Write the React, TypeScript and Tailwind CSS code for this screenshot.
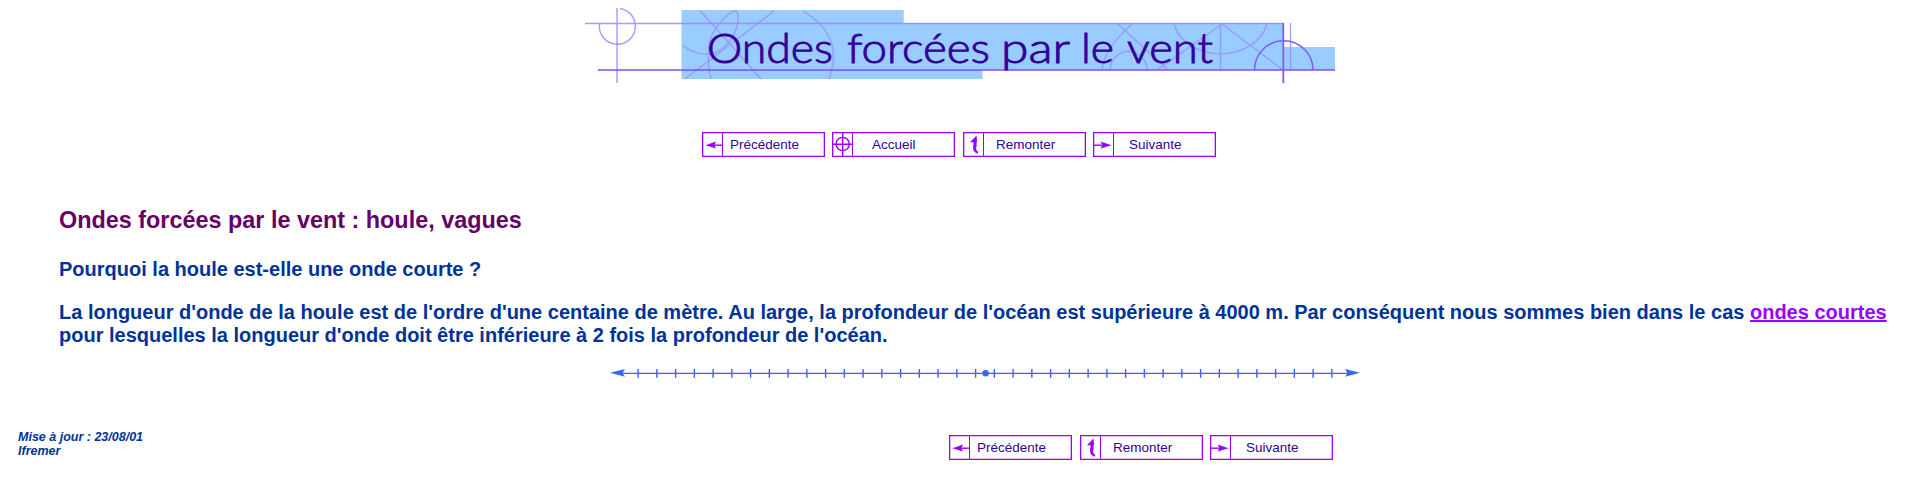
type IconName = "left" | "home" | "up" | "right";

function NavIcon({ name }: { name: IconName }) {
  return (
    <svg width="20" height="23" viewBox="0 0 20 23" fill="none" stroke="#9900ff" strokeWidth="1.4" className="block shrink-0">
      {name === "left" && (
        <>
          <path d="M7 12.2H20" />
          <path d="M2.5 12.2L13 8.6L11.3 12.2L13 15.4Z" fill="#9900ff" stroke="none" />
        </>
      )}
      {name === "right" && (
        <>
          <path d="M0 12.2H11" />
          <path d="M17.5 12.2L6.5 8.6L8.5 12.2L6.5 15.4Z" fill="#9900ff" stroke="none" />
        </>
      )}
      {name === "home" && (
        <>
          <circle cx="9.7" cy="11" r="6.6" />
          <path d="M0 11.2H20M9.7 0V23" />
        </>
      )}
      {name === "up" && (
        <>
          <path d="M12.6 2.6L6 9.2H13Z" fill="#9900ff" stroke="none" />
          <path d="M11 6V13.5" strokeWidth="3" />
          <path d="M9.4 12C8.4 17 10 19.8 14 20.6L14.2 18.8C12.4 17.5 11.6 16 12.5 12Z" fill="#9900ff" stroke="none" />
        </>
      )}
    </svg>
  );
}

function NavButton({ icon, label, pad }: { icon: IconName; label: string; pad: string }) {
  return (
    <a className="flex h-[25px] w-[122.6px] shrink-0 border border-[#9900ff] bg-white shadow-[inset_0_0_0_0.3px_#9900ff]">
      <span className="w-[20px] shrink-0 border-r border-[#9900ff]">
        <NavIcon name={icon} />
      </span>
      <span className={`${pad} text-[13.5px] leading-[23px] text-[#330099]`}>{label}</span>
    </a>
  );
}

function Banner() {
  return (
    <svg width="750" height="76" viewBox="585 8 750 76" fill="none" className="block shrink-0">
      <path d="M681.5 10H903.7V23H1283.5V47H1335V70H982.5V79H681.5Z" fill="#99ccff" />
      <g stroke="#9980ff" strokeOpacity="0.8" strokeWidth="1.4">
        <path d="M585 23.5H1283M617 8V83" />
        <path d="M599.5 24A18 18 0 1 0 620 8.5" />
        <g strokeOpacity="0.65">
          <path d="M700.5 11L761 79M774 11L685 79" />
          <path d="M682 45Q695 55 708 54C725 53 739 34 738 15Q737 8 729 14Q708 32 709 50Q707 65 711 79" />
          <path d="M803 11Q845 36 829 79" />
          <path d="M1118 24L1168 70M1132 24Q1103 50 1102 70M1110 70A18 18 0 0 1 1147 70M1157 70L1222 24L1283 70M1220.5 24V70M1174 24A47.5 37.5 0 0 0 1267 24" />
        </g>
        <path d="M1290.5 23V70" />
      </g>
      <path d="M598 70H1335" stroke="#7c4dff" strokeWidth="1.6" />
      <path d="M1283.3 23V83" stroke="#7c5cff" strokeWidth="1.8" />
      <path d="M1254.5 70A29 29 0 0 1 1313 70" stroke="#7c5cff" strokeWidth="1.5" />
      <g fill="#330099" fontFamily="Lato, 'Liberation Sans', sans-serif" fontSize="41" fontWeight="300" stroke="#330099" strokeWidth="0.9">
        <text x="707" y="63" textLength="126" lengthAdjust="spacingAndGlyphs">Ondes</text>
        <text x="847" y="63" textLength="143" lengthAdjust="spacingAndGlyphs">forcées</text>
        <text x="1001" y="63" textLength="69" lengthAdjust="spacingAndGlyphs">par</text>
        <text x="1081" y="63" textLength="33" lengthAdjust="spacingAndGlyphs">le</text>
        <text x="1127" y="63" textLength="86" lengthAdjust="spacingAndGlyphs">vent</text>
      </g>
    </svg>
  );
}

function Ruler() {
  return (
    <svg width="750" height="12" viewBox="0 0 750 12" className="block shrink-0">
      <path d="M10 6.4H740" stroke="#3366ff" strokeWidth="1.4" />
      {Array.from({ length: 38 }, (_, i) => (
        <path key={i} d={`M${28.1 + i * 18.75} 2V10.8`} stroke="#3366ff" strokeWidth="1.4" />
      ))}
      <circle cx="375.6" cy="6.3" r="3.2" fill="#3366ff" />
      <path d="M0 5.8L15 2L12.5 6.3L15 9.8Z M750 5.8L735 2L737.5 6.3L735 9.8Z" fill="#3366ff" />
    </svg>
  );
}

export default function App() {
  return (
    <div className="flex h-[488px] w-[1920px] flex-col overflow-hidden bg-white font-['Liberation_Sans',Arial,sans-serif] text-[#003399]">
      <header className="flex flex-col pt-2">
        <div className="pl-[585px]">
          <Banner />
        </div>
        <nav className="mt-12 flex pl-[702px]">
          <NavButton icon="left" label="Précédente" pad="pl-[7px]" />
          <div className="w-[7.4px]" />
          <NavButton icon="home" label="Accueil" pad="pl-[19px]" />
          <div className="w-[8.4px]" />
          <NavButton icon="up" label="Remonter" pad="pl-[12px]" />
          <div className="w-[7.4px]" />
          <NavButton icon="right" label="Suivante" pad="pl-[15px]" />
        </nav>
      </header>
      <main className="pt-[49px] pl-[59px] font-bold">
        <h1 className="text-[23.4px] leading-[28px] text-[#660066]">Ondes forcées par le vent : houle, vagues</h1>
        <h2 className="mt-[24px] text-[20px] leading-[23px]">Pourquoi la houle est-elle une onde courte ?</h2>
        <p className="mt-[20px] text-[20px] leading-[23px] whitespace-nowrap">
          La longueur d'onde de la houle est de l'ordre d'une centaine de mètre. Au large, la profondeur de l'océan est supérieure à 4000 m. Par conséquent nous sommes bien dans le cas{" "}
          <a className="text-[#9900ff] underline">ondes courtes</a>
          <br />
          pour lesquelles la longueur d'onde doit être inférieure à 2 fois la profondeur de l'océan.
        </p>
      </main>
      <div className="mt-[20px] pl-[610px]">
        <Ruler />
      </div>
      <footer className="mt-[50px] flex">
        <p className="w-[949px] pt-px pl-[18px] text-[12.5px] leading-[14px] font-bold italic">
          Mise à jour : 23/08/01
          <br />
          Ifremer
        </p>
        <nav className="mt-[6px] flex">
          <NavButton icon="left" label="Précédente" pad="pl-[7px]" />
          <div className="w-[8.4px]" />
          <NavButton icon="up" label="Remonter" pad="pl-[12px]" />
          <div className="w-[7.4px]" />
          <NavButton icon="right" label="Suivante" pad="pl-[15px]" />
        </nav>
      </footer>
    </div>
  );
}
